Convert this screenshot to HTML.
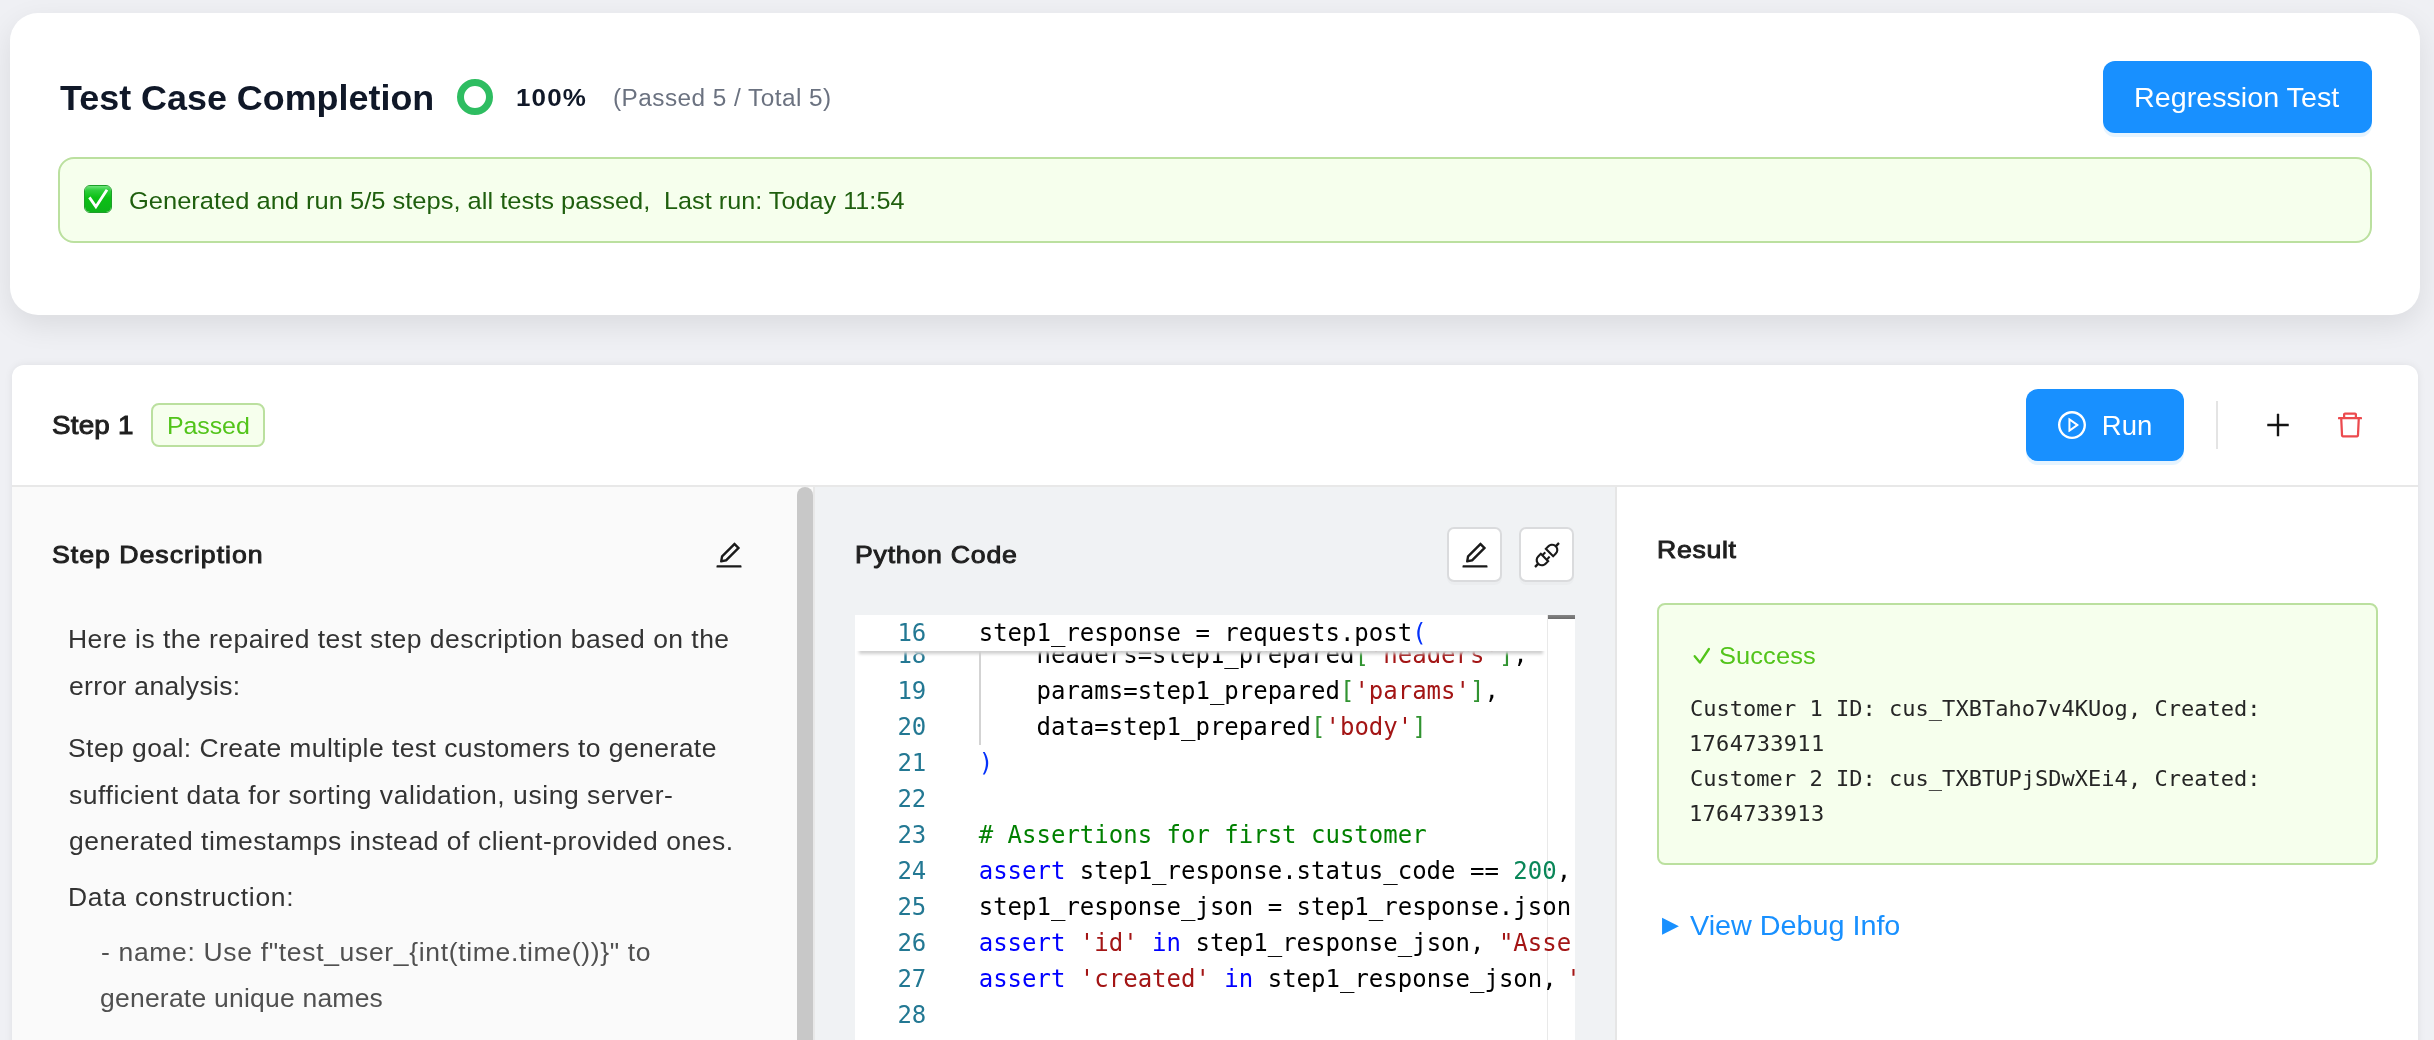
<!DOCTYPE html>
<html lang="en">
<head>
<meta charset="utf-8">
<title>Test Case Completion</title>
<style>
html,body{margin:0;padding:0;}
body{width:2434px;height:1040px;overflow:hidden;background:#eff0f4;position:relative;font-family:"Liberation Sans",sans-serif;}
#wrap{position:absolute;left:0;top:0;width:2434px;height:1040px;overflow:hidden;will-change:transform;}
.abs{position:absolute;box-sizing:border-box;margin:0;padding:0;}
.t{position:absolute;white-space:pre;display:block;transform-origin:0 0;margin:0;padding:0;border:0;background:none;text-align:left;}
button{font:inherit;color:inherit;border:0;padding:0;margin:0;cursor:pointer;}
#card1{left:10px;top:13px;width:2410px;height:302px;background:#fff;border-radius:28px;box-shadow:0 10px 30px rgba(0,0,0,0.09);}
#card2{left:12px;top:365px;width:2406px;height:760px;background:#fff;border-radius:12px 12px 0 0;box-shadow:0 0 8px rgba(0,0,0,0.07);overflow:hidden;}
#ring{left:447px;top:66px;width:36px;height:36px;border-radius:50%;border:7.5px solid #2ebd61;}
#btn-reg{left:2093px;top:48px;width:269px;height:72px;border-radius:12px;background:#1890ff;box-shadow:0 4px 0 rgba(5,145,255,0.1);}
#alert{left:48px;top:144px;width:2314px;height:86px;border-radius:16px;background:#f6ffed;border:2px solid #bbe09f;}
#tagbox{left:139px;top:38px;width:114px;height:43.5px;border-radius:8px;background:#f6ffed;border:2px solid #bbe09f;}
#btn-run{left:2014px;top:24px;width:158px;height:72px;border-radius:12px;background:#1890ff;box-shadow:0 4px 0 rgba(5,145,255,0.1);}
#vdiv{left:2204px;top:36px;width:2px;height:48px;background:#e4e4e4;}
#hline{left:0;top:120px;width:2406px;height:2px;background:#e8e8e8;}
#pleft{left:0;top:122px;width:785px;height:560px;background:#fafafa;}
#track{left:785px;top:122px;width:16px;height:600px;background:#fafafa;}
#thumb{left:0;top:0;width:16px;height:600px;background:#c8c8c8;border-radius:8px 8px 0 0;}
#b813{left:801px;top:122px;width:2px;height:560px;background:#e8e8e8;}
#pmid{left:803px;top:122px;width:800px;height:560px;background:#f0f2f4;}
#b1615{left:1603px;top:122px;width:2px;height:560px;background:#e6e6e6;}
#pright{left:1605px;top:122px;width:801px;height:560px;background:#fff;}
.ibtn{width:55px;height:55px;border-radius:7px;background:#fff;border:2px solid #dadbdd;box-shadow:0 3px 0 rgba(0,0,0,0.02);}
#ib1{left:632px;top:40px;}
#ib2{left:704px;top:40px;}
#okbox{left:40px;top:116px;width:721px;height:262px;border-radius:8px;background:#f6ffed;border:2px solid #bbe09f;}
svg.ic{position:absolute;overflow:visible;}
#emoji{left:24px;top:26px;width:28px;height:28px;border-radius:6px;border:1.2px solid #1d9f29;background:linear-gradient(#6fe57c 0%,#2fcf3d 16%,#0cc015 45%,#0db31a 100%);background-clip:padding-box;}
#tri{left:45px;top:423px;font-family:"DejaVu Sans",sans-serif;font-size:22px;line-height:30px;color:#1890ff;}
/* editor */
#ed{left:40px;top:128px;width:720px;height:440px;background:#fff;overflow:hidden;font-family:"DejaVu Sans Mono","Liberation Mono",monospace;font-size:24px;}
.ln{position:absolute;left:0;width:720px;height:36px;line-height:36px;white-space:pre;}
.ln .n{position:absolute;left:0;width:71.3px;text-align:right;color:#237893;}
.ln .c{position:absolute;left:123.7px;color:#000;}
.k{color:#0000ff}.s{color:#a31515}.m{color:#098658}.cm{color:#008000}.b1{color:#0431fa}.b2{color:#319331}
#sticky{position:absolute;left:0;top:0;width:692px;height:36px;background:#fff;box-shadow:0 7px 3px -4px #d0d0d0;}
#guide{position:absolute;left:124px;top:36px;width:2px;height:94px;background:#d3d3d3;}
#lane{position:absolute;left:692px;top:0;width:1px;height:440px;background:#e9e9e9;}
#lanebar{position:absolute;left:693px;top:0;width:27px;height:4px;background:linear-gradient(#858585,#6c6c6c);}
</style>
</head>
<body>
<div id="wrap">
<section class="abs" id="card1">
<h1 class="t" id="t-title" style="left:49.50px;top:60.00px;font-family:'Liberation Sans', sans-serif;font-weight:700;font-size:35.5px;line-height:50px;letter-spacing:0.000px;color:#101828;transform:scaleX(1.0109);">Test Case Completion</h1>
<strong class="t" id="t-pct" style="left:505.50px;top:68.00px;font-family:'Liberation Sans', sans-serif;font-weight:700;font-size:24.5px;line-height:34px;letter-spacing:1.101px;color:#101828;transform:scaleX(1.06);">100%</strong>
<span class="t" id="t-passed" style="left:602.80px;top:69.00px;font-family:'Liberation Sans', sans-serif;font-weight:400;font-size:23px;line-height:32px;letter-spacing:0.422px;color:#6b7280;transform:scaleX(1.06);">(Passed 5 / Total 5)</span>
<div class="abs" id="ring"></div>
<button class="abs" id="btn-reg" type="button"><span class="t" id="t-regr" style="left:31.30px;top:16.00px;font-family:'Liberation Sans', sans-serif;font-weight:400;font-size:28.5px;line-height:40px;letter-spacing:0.014px;color:#ffffff;transform:scaleX(1.0059);">Regression Test</span></button>
<div class="abs" id="alert">
<span class="abs" id="emoji"><svg class="ic" style="left:-1.2px;top:-1.2px" width="28" height="28" viewBox="0 0 28 28"><path d="M5.4 12.4 L11.9 21.8 L23 4.8" fill="none" stroke="#fff" stroke-width="2.8" stroke-linecap="butt" stroke-linejoin="miter" stroke-miterlimit="10"/></svg></span>
<span class="t" id="t-alert" style="left:68.50px;top:25.00px;font-family:'Liberation Sans', sans-serif;font-weight:400;font-size:24.5px;line-height:34px;letter-spacing:-0.011px;color:#1f5f0e;transform:scaleX(1.0412);">Generated and run 5/5 steps, all tests passed,</span>
<span class="t" id="t-alert2" style="left:604.00px;top:25.00px;font-family:'Liberation Sans', sans-serif;font-weight:400;font-size:24.5px;line-height:34px;letter-spacing:0.024px;color:#1f5f0e;transform:scaleX(1.0281);">Last run: Today 11:54</span>
</div>
</section>

<section class="abs" id="card2">
<h2 class="t" id="t-step1" style="left:40.30px;top:43.00px;font-family:'Liberation Sans', sans-serif;font-weight:400;font-size:25px;line-height:35px;letter-spacing:0.216px;color:#1f1f1f;-webkit-text-stroke:0.95px #1f1f1f;transform:scaleX(1.11);">Step 1</h2>
<div class="abs" id="tagbox"><span class="t" id="t-tag" style="left:13.50px;top:4.00px;font-family:'Liberation Sans', sans-serif;font-weight:400;font-size:24.5px;line-height:34px;letter-spacing:-0.098px;color:#52c41a;transform:scaleX(1.0192);">Passed</span></div>
<button class="abs" id="btn-run" type="button">
<svg class="ic" style="left:30px;top:20px" width="32" height="32" viewBox="0 0 1024 1024" fill="#fff"><path d="M512 64C264.600 64 64 264.600 64 512s200.600 448 448 448 448-200.600 448-448S759.400 64 512 64zm0 820c-205.400 0-372-166.600-372-372s166.600-372 372-372 372 166.600 372 372-166.600 372-372 372z"/><path d="M719.400 499.100l-296.100-215A15.900 15.900 0 00398 297v430c0 13.100 14.800 20.500 25.300 12.900l296.100-215a15.900 15.900 0 000-25.800zm-257.600 134V390.900L628.500 512 461.800 633.100z"/></svg>
<span class="t" id="t-run" style="left:75.80px;top:18.00px;font-family:'Liberation Sans', sans-serif;font-weight:400;font-size:27.5px;line-height:38px;letter-spacing:0.000px;color:#ffffff;transform:scaleX(1.0);">Run</span>
</button>
<div class="abs" id="vdiv"></div>
<svg class="ic" style="left:2250px;top:44px" width="32" height="32" viewBox="0 0 1024 1024" fill="#141414"><path d="M482 152h60q8 0 8 8v704q0 8-8 8h-60q-8 0-8-8V160q0-8 8-8z"/><path d="M176 474h672q8 0 8 8v60q0 8-8 8H176q-8 0-8-8v-60q0-8 8-8z"/></svg>
<svg class="ic" style="left:2322px;top:44px" width="32" height="32" viewBox="0 0 1024 1024" fill="#ec4a4e"><path d="M360 184h-8c4.400 0 8-3.600 8-8v8h304v-8c0 4.400 3.600 8 8 8h-8v72h72v-80c0-35.300-28.700-64-64-64H352c-35.300 0-64 28.700-64 64v80h72v-72zm504 72H160c-17.700 0-32 14.300-32 32v32c0 4.400 3.600 8 8 8h60.400l24.700 523c1.600 34.100 29.800 61 63.900 61h454c34.200 0 62.300-26.800 63.900-61l24.700-523H888c4.400 0 8-3.600 8-8v-32c0-17.700-14.300-32-32-32zM731.300 840H292.700l-24.200-512h487l-24.200 512z"/></svg>
<div class="abs" id="hline"></div>

<div class="abs" id="pleft">
<h3 class="t" id="t-sd" style="left:40.30px;top:51.00px;font-family:'Liberation Sans', sans-serif;font-weight:400;font-size:24px;line-height:34px;letter-spacing:0.913px;color:#1f1f1f;-webkit-text-stroke:0.95px #1f1f1f;transform:scaleX(1.11);">Step Description</h3>
<p class="t" id="t-d1" style="left:55.50px;top:135.00px;font-family:'Liberation Sans', sans-serif;font-weight:400;font-size:25px;line-height:35px;letter-spacing:0.432px;color:#333333;transform:scaleX(1.06);">Here is the repaired test step description based on the</p>
<p class="t" id="t-d2" style="left:56.50px;top:182.00px;font-family:'Liberation Sans', sans-serif;font-weight:400;font-size:25px;line-height:35px;letter-spacing:0.323px;color:#333333;transform:scaleX(1.06);">error analysis:</p>
<p class="t" id="t-d3" style="left:55.50px;top:244.00px;font-family:'Liberation Sans', sans-serif;font-weight:400;font-size:25px;line-height:35px;letter-spacing:0.406px;color:#333333;transform:scaleX(1.06);">Step goal: Create multiple test customers to generate</p>
<p class="t" id="t-d4" style="left:56.50px;top:291.00px;font-family:'Liberation Sans', sans-serif;font-weight:400;font-size:25px;line-height:35px;letter-spacing:0.515px;color:#333333;transform:scaleX(1.06);">sufficient data for sorting validation, using server-</p>
<p class="t" id="t-d5" style="left:56.50px;top:337.00px;font-family:'Liberation Sans', sans-serif;font-weight:400;font-size:25px;line-height:35px;letter-spacing:0.503px;color:#333333;transform:scaleX(1.06);">generated timestamps instead of client-provided ones.</p>
<p class="t" id="t-d6" style="left:55.50px;top:393.00px;font-family:'Liberation Sans', sans-serif;font-weight:400;font-size:25px;line-height:35px;letter-spacing:0.671px;color:#333333;transform:scaleX(1.06);">Data construction:</p>
<p class="t" id="t-d7" style="left:88.50px;top:448.00px;font-family:'Liberation Sans', sans-serif;font-weight:400;font-size:25px;line-height:35px;letter-spacing:0.629px;color:#505050;transform:scaleX(1.06);">- name: Use f&quot;test_user_{int(time.time())}&quot; to</p>
<p class="t" id="t-d8" style="left:88.20px;top:494.00px;font-family:'Liberation Sans', sans-serif;font-weight:400;font-size:25px;line-height:35px;letter-spacing:0.208px;color:#505050;transform:scaleX(1.06);">generate unique names</p>
<svg class="ic" style="left:701px;top:52px" width="32" height="32" viewBox="0 0 1024 1024" fill="#1a1a1a"><path d="M257.700 752c2 0 4-.2 6-.5L431.900 722c2-.4 3.900-1.300 5.300-2.800l423.900-423.900a9.960 9.960 0 000-14.100L694.900 114.900c-1.900-1.900-4.400-2.900-7.100-2.900s-5.200 1-7.100 2.900L256.800 538.800c-1.500 1.500-2.400 3.300-2.800 5.300l-29.500 168.200a33.500 33.500 0 009.400 29.800c6.600 6.400 14.900 9.900 23.800 9.900zm67.400-174.400L687.800 215l73.300 73.300-362.700 362.600-88.900 15.700 15.600-89zM880 836H144c-17.700 0-32 14.300-32 32v36c0 4.400 3.600 8 8 8h784c4.400 0 8-3.600 8-8v-36c0-17.700-14.300-32-32-32z"/></svg>
</div>
<div class="abs" id="track"><div class="abs" id="thumb"></div></div>
<div class="abs" id="b813"></div>

<div class="abs" id="pmid">
<h3 class="t" id="t-pc" style="left:39.70px;top:51.00px;font-family:'Liberation Sans', sans-serif;font-weight:400;font-size:24px;line-height:34px;letter-spacing:0.703px;color:#1f1f1f;-webkit-text-stroke:0.95px #1f1f1f;transform:scaleX(1.11);">Python Code</h3>
<button class="abs ibtn" id="ib1" type="button"><svg class="ic" style="left:10px;top:10px" width="32" height="32" viewBox="0 0 1024 1024" fill="#1a1a1a"><path d="M257.700 752c2 0 4-.2 6-.5L431.900 722c2-.4 3.900-1.300 5.300-2.800l423.900-423.900a9.960 9.960 0 000-14.100L694.900 114.900c-1.900-1.900-4.400-2.900-7.100-2.900s-5.200 1-7.100 2.900L256.800 538.800c-1.500 1.500-2.400 3.300-2.800 5.300l-29.500 168.200a33.500 33.500 0 009.400 29.800c6.600 6.400 14.900 9.900 23.800 9.900zm67.400-174.400L687.800 215l73.300 73.300-362.700 362.600-88.900 15.700 15.600-89zM880 836H144c-17.700 0-32 14.300-32 32v36c0 4.400 3.600 8 8 8h784c4.400 0 8-3.600 8-8v-36c0-17.700-14.300-32-32-32z"/></svg></button>
<button class="abs ibtn" id="ib2" type="button"><svg class="ic" style="left:10px;top:10px" width="32" height="32" viewBox="0 0 1024 1024" fill="#1a1a1a"><path d="M917.700 148.800l-42.400-42.400c-1.600-1.600-3.600-2.300-5.700-2.300s-4.100.8-5.700 2.300l-76.100 76.100a199.270 199.270 0 00-112.100-34.300c-51.200 0-102.400 19.500-141.500 58.600L432.300 308.700a8.030 8.030 0 000 11.300L704 591.700c1.600 1.600 3.600 2.300 5.700 2.300 2 0 4.100-.8 5.700-2.300l101.900-101.900c68.900-69 77-175.700 24.300-253.500l76.100-76.100c3.100-3.200 3.100-8.300 0-11.400zM769.100 441.700l-59.400 59.400-186.800-186.800 59.400-59.400c24.900-24.900 58.100-38.700 93.400-38.700 35.300 0 68.400 13.700 93.400 38.700 24.900 24.900 38.700 58.100 38.700 93.400 0 35.300-13.800 68.400-38.700 93.400zm-190.200 105a8.030 8.030 0 00-11.300 0L501 613.300 410.700 523l66.700-66.700c3.100-3.100 3.100-8.200 0-11.300L441 408.600a8.030 8.030 0 00-11.300 0L363 475.300l-43-43a7.850 7.850 0 00-5.700-2.300c-2 0-4.100.8-5.700 2.300L206.800 534.200c-68.900 69-77 175.700-24.300 253.500l-76.100 76.100a8.030 8.030 0 000 11.300l42.400 42.400c1.600 1.600 3.600 2.300 5.700 2.300s4.100-.8 5.700-2.300l76.100-76.100c33.700 22.900 72.900 34.300 112.100 34.300 51.200 0 102.400-19.500 141.500-58.600l101.900-101.900c3.100-3.100 3.100-8.200 0-11.300l-43-43 66.700-66.700c3.100-3.100 3.100-8.200 0-11.300l-36.600-36.200zM441.700 769.100a131.320 131.320 0 01-93.400 38.700c-35.300 0-68.400-13.700-93.400-38.700a131.320 131.320 0 01-38.700-93.400c0-35.300 13.700-68.400 38.700-93.400l59.400-59.400 186.800 186.800-59.400 59.400z"/></svg></button>
<div class="abs" id="ed">
<div id="lane"></div>
<div class="ln" style="top:22px"><span class="n">18</span><span class="c">    headers=step1_prepared<span class="b2">[</span><span class="s">'headers'</span><span class="b2">]</span>,</span></div>
<div class="ln" style="top:58px"><span class="n">19</span><span class="c">    params=step1_prepared<span class="b2">[</span><span class="s">'params'</span><span class="b2">]</span>,</span></div>
<div class="ln" style="top:94px"><span class="n">20</span><span class="c">    data=step1_prepared<span class="b2">[</span><span class="s">'body'</span><span class="b2">]</span></span></div>
<div class="ln" style="top:130px"><span class="n">21</span><span class="c"><span class="b1">)</span></span></div>
<div class="ln" style="top:166px"><span class="n">22</span><span class="c"></span></div>
<div class="ln" style="top:202px"><span class="n">23</span><span class="c"><span class="cm"># Assertions for first customer</span></span></div>
<div class="ln" style="top:238px"><span class="n">24</span><span class="c"><span class="k">assert</span> step1_response.status_code == <span class="m">200</span>, <span class="s">f"Expected status code 200"</span></span></div>
<div class="ln" style="top:274px"><span class="n">25</span><span class="c">step1_response_json = step1_response.json<span class="b1">()</span></span></div>
<div class="ln" style="top:310px"><span class="n">26</span><span class="c"><span class="k">assert</span> <span class="s">'id'</span> <span class="k">in</span> step1_response_json, <span class="s">"Assertion failed: 'id' not in response"</span></span></div>
<div class="ln" style="top:346px"><span class="n">27</span><span class="c"><span class="k">assert</span> <span class="s">'created'</span> <span class="k">in</span> step1_response_json, <span class="s" style="margin-left:-2.6px">"Assertion failed: 'created' not in response"</span></span></div>
<div class="ln" style="top:382px"><span class="n">28</span><span class="c"></span></div>
<div id="guide"></div>
<div id="sticky"><div class="ln" style="top:0"><span class="n">16</span><span class="c">step1_response = requests.post<span class="b1">(</span></span></div></div>
<div id="lanebar"></div>
</div>

</div>
<div class="abs" id="b1615"></div>

<div class="abs" id="pright">
<h3 class="t" id="t-res" style="left:39.50px;top:46.00px;font-family:'Liberation Sans', sans-serif;font-weight:400;font-size:24px;line-height:34px;letter-spacing:0.631px;color:#1f1f1f;-webkit-text-stroke:0.95px #1f1f1f;transform:scaleX(1.11);">Result</h3>
<span class="t" id="t-dbg" style="left:72.60px;top:419.00px;font-family:'Liberation Sans', sans-serif;font-weight:400;font-size:28px;line-height:39px;letter-spacing:-0.021px;color:#1890ff;transform:scaleX(1.0279);">View Debug Info</span>
<div class="abs" id="okbox">
<svg class="ic" style="left:33px;top:41px" width="20" height="20" viewBox="0 0 20 20"><path d="M2.7 10.2 L7.9 16.6 L16.9 3" fill="none" stroke="#52c41a" stroke-width="2.3" stroke-linecap="round" stroke-linejoin="round"/></svg>
<strong class="t" id="t-succ" style="left:60.30px;top:34.00px;font-family:'Liberation Sans', sans-serif;font-weight:400;font-size:24.5px;line-height:34px;letter-spacing:0.080px;color:#52c41a;transform:scaleX(1.0385);">Success</strong>
<code class="t" id="t-r1" style="left:31.00px;top:88.00px;font-family:'DejaVu Sans Mono', 'Liberation Mono', monospace;font-weight:400;font-size:22px;line-height:31px;letter-spacing:0.024px;color:#262626;">Customer 1 ID: cus_TXBTaho7v4KUog, Created:</code>
<code class="t" id="t-r2" style="left:30.00px;top:123.00px;font-family:'DejaVu Sans Mono', 'Liberation Mono', monospace;font-weight:400;font-size:22px;line-height:31px;letter-spacing:0.300px;color:#262626;">1764733911</code>
<code class="t" id="t-r3" style="left:31.00px;top:158.00px;font-family:'DejaVu Sans Mono', 'Liberation Mono', monospace;font-weight:400;font-size:22px;line-height:31px;letter-spacing:0.024px;color:#262626;">Customer 2 ID: cus_TXBTUPjSDwXEi4, Created:</code>
<code class="t" id="t-r4" style="left:30.00px;top:193.00px;font-family:'DejaVu Sans Mono', 'Liberation Mono', monospace;font-weight:400;font-size:22px;line-height:31px;letter-spacing:0.300px;color:#262626;">1764733913</code>
</div>
<span class="t" id="tri">▶</span>
</div>
</section>
</div>
</body>
</html>
